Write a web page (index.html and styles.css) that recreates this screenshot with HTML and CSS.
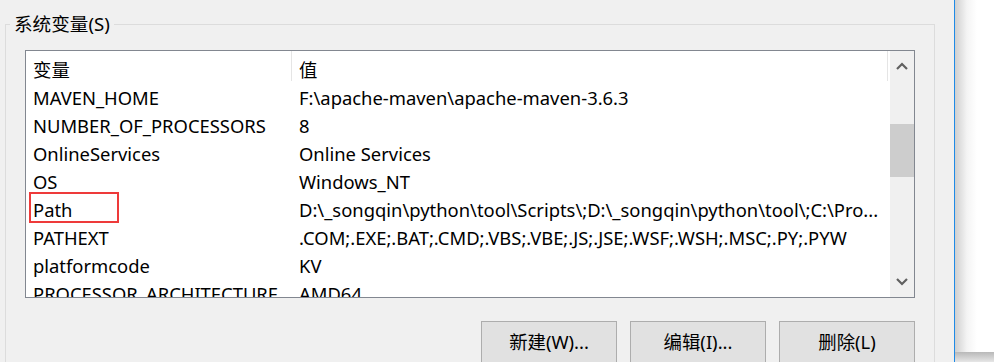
FILE: index.html
```html
<!DOCTYPE html>
<html lang="zh-CN">
<head>
  <meta charset="UTF-8" />
  <meta name="viewport" content="width=device-width, initial-scale=1.0"/>
  <title>系统变量</title>
  <link rel="stylesheet" href="styles.css">
</head>
<body>
  <div class="dialog">
    <fieldset class="group">
      <legend>系统变量(S)</legend>
      <div class="listView">
        <div class="table">
          <div class="row header">
            <div class="cell name">变量</div>
            <div class="cell value">值</div>
          </div>
          <div class="rows">
            <div class="row"><div class="cell name">MAVEN_HOME</div><div class="cell value">F:\apache-maven\apache-maven-3.6.3</div></div>
            <div class="row"><div class="cell name">NUMBER_OF_PROCESSORS</div><div class="cell value">8</div></div>
            <div class="row"><div class="cell name">OnlineServices</div><div class="cell value">Online Services</div></div>
            <div class="row"><div class="cell name">OS</div><div class="cell value">Windows_NT</div></div>
            <div class="row"><div class="cell name marked">Path</div><div class="cell value">D:\_songqin\python\tool\Scripts\;D:\_songqin\python\tool\;C:\Pro...</div></div>
            <div class="row"><div class="cell name">PATHEXT</div><div class="cell value">.COM;.EXE;.BAT;.CMD;.VBS;.VBE;.JS;.JSE;.WSF;.WSH;.MSC;.PY;.PYW</div></div>
            <div class="row"><div class="cell name">platformcode</div><div class="cell value">KV</div></div>
            <div class="row"><div class="cell name">PROCESSOR_ARCHITECTURE</div><div class="cell value">AMD64</div></div>
          </div>
        </div>
        <div class="scrollbar">
          <div class="arrow">
            <svg width="12" height="8" viewBox="0 0 12 8"><path d="M1 7 L6 2 L11 7" fill="none" stroke="#606060" stroke-width="2.2"/></svg>
          </div>
          <div class="track">
            <div class="thumb"></div>
          </div>
          <div class="arrow">
            <svg width="12" height="8" viewBox="0 0 12 8"><path d="M1 1 L6 6 L11 1" fill="none" stroke="#606060" stroke-width="2.2"/></svg>
          </div>
        </div>
      </div>
      <div class="buttons">
        <button>新建(W)...</button>
        <button>编辑(I)...</button>
        <button>删除(L)</button>
      </div>
    </fieldset>
  </div>
  <div class="behind">
    <div class="behindTop"></div>
    <div class="behindBottom"></div>
  </div>
</body>
</html>
```

FILE: styles.css
```css
* {
  margin: 0;
  padding: 0;
  box-sizing: border-box;
  font-family: 'Noto Sans', 'Noto Sans CJK SC', sans-serif;
}

body {
  width: 994px;
  height: 362px;
  overflow: hidden;
  display: flex;
  background: #fff;
  color: #000;
  font-size: 18.4px;
}

.dialog {
  width: 955px;
  height: 362px;
  background: #f0f0f0;
  border-right: 1px solid #1e8ae6;
  padding: 11px 0 0 5px;
}

.group {
  width: 930px;
  height: 400px;
  border: 1px solid #dcdcdc;
  padding: 13px 18px 0 19px;
}

.group legend {
  margin-left: -15px;
  padding: 0 4px;
  line-height: 26px;
  font-size: 18.6px;
}

.listView {
  display: flex;
  width: 890px;
  height: 248px;
  border: 1px solid #828790;
  background: #fff;
}

.table {
  flex: 1;
  overflow: hidden;
}

.row {
  display: flex;
  height: 28px;
  align-items: center;
  white-space: nowrap;
}

.row.header {
  height: 30px;
  margin-right: 2px;
  border-right: 1px solid #e5e5e5;
}

.header .name {
  border-right: 1px solid #e5e5e5;
  height: 30px;
  display: flex;
  align-items: center;
}

.cell {
  padding: 5px 0 0 7px;
  overflow: hidden;
}

.cell.name {
  width: 266px;
  flex-shrink: 0;
}

.cell.value {
  flex: 1;
}

.marked {
  position: relative;
  overflow: visible;
}

.marked::after {
  content: "";
  position: absolute;
  box-sizing: border-box;
  left: 3px;
  top: 0;
  width: 90px;
  height: 31px;
  border: 2px solid #ee3a3a;
}

.scrollbar {
  width: 24px;
  background: #f0f0f0;
  display: flex;
  flex-direction: column;
}

.arrow {
  height: 30px;
  display: flex;
  align-items: center;
  justify-content: center;
}

.track {
  flex: 1;
  padding-top: 43px;
}

.thumb {
  height: 53px;
  background: #cdcdcd;
}

.buttons {
  display: flex;
  justify-content: flex-end;
  gap: 13px;
  margin-top: 23px;
  width: 890px;
}

.buttons button {
  width: 136px;
  height: 46px;
  background: #e1e1e1;
  border: 1px solid #adadad;
  font-size: 18.4px;
  color: #000;
  padding-bottom: 6px;
}

.behind {
  flex: 1;
  display: flex;
  flex-direction: column;
}

.behindTop {
  flex: 1;
  background: linear-gradient(to right, #cfcfcf, #f4f4f4 12px, #fff 22px);
}

.behindBottom {
  height: 10px;
  background: linear-gradient(to bottom, #b8b8b8, #e6e6e6);
}
```
